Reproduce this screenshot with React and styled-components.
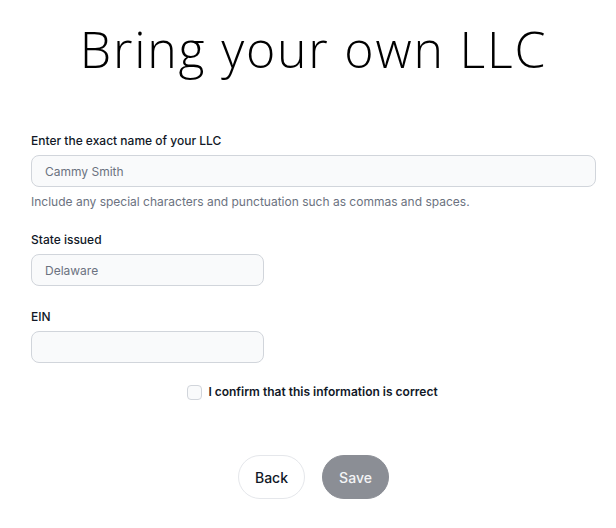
import styled, { createGlobalStyle } from "styled-components";

const GlobalStyle = createGlobalStyle`
  body {
    margin: 0;
    background: #ffffff;
    font-family: Inter, "Liberation Sans", sans-serif;
    color: #111827;
  }
`;

const App = () => {
  return (
    <>
      <GlobalStyle />
      <Page>
        <Title>Bring your own LLC</Title>
        <Form>
          <Field $gap={19}>
            <Label>Enter the exact name of your LLC</Label>
            <TextInput defaultValue="Cammy Smith" />
            <Help>
              Include any special characters and punctuation such as commas and
              spaces.
            </Help>
          </Field>
          <Field>
            <Label>State issued</Label>
            <TextInput $short defaultValue="Delaware" />
          </Field>
          <Field>
            <Label>EIN</Label>
            <TextInput $short />
          </Field>
          <ConfirmRow>
            <Checkbox type="checkbox" />
            <ConfirmText>I confirm that this information is correct</ConfirmText>
          </ConfirmRow>
          <Actions>
            <BackBtn type="button">Back</BackBtn>
            <SaveBtn type="button">Save</SaveBtn>
          </Actions>
        </Form>
      </Page>
    </>
  );
};

const Page = styled.div`
  width: 565px;
  padding: 0 20px 0 31px;
`;

const Title = styled.h1`
  margin: 0;
  padding-top: 15px;
  text-align: center;
  font-family: "Open Sans", sans-serif;
  font-weight: 300;
  font-size: 50px;
  letter-spacing: 1.8px;
  line-height: 68px;
  color: #000000;
`;

const Form = styled.form`
  display: flex;
  flex-direction: column;
  margin-top: 48px;
`;

const Field = styled.div`
  display: flex;
  flex-direction: column;
  margin-bottom: ${(p) => p.$gap ?? 21}px;
`;

const Label = styled.label`
  font-size: 12px;
  font-weight: 500;
  line-height: 20px;
  color: #111827;
  margin-bottom: 4px;
`;

const TextInput = styled.input`
  box-sizing: border-box;
  width: ${(p) => (p.$short ? "233px" : "100%")};
  height: 32px;
  padding: 0 13px;
  background: #f9fafb;
  border: 1px solid #d1d5db;
  border-radius: 8px;
  font-family: Inter, "Liberation Sans", sans-serif;
  font-size: 12px;
  color: #6b7280;
  outline: none;
`;

const Help = styled.p`
  margin: 6px 0 0;
  font-size: 12px;
  line-height: 18px;
  color: #6b7280;
`;

const ConfirmRow = styled.label`
  display: flex;
  align-items: center;
  justify-content: center;
  gap: 6px;
  margin-top: -2px;
  margin-left: -2px;
`;

const Checkbox = styled.input`
  appearance: none;
  width: 15px;
  height: 15px;
  margin: 0;
  border: 1px solid #d1d5db;
  border-radius: 4px;
  background: #f9fafb;
`;

const ConfirmText = styled.span`
  font-size: 12px;
  font-weight: 600;
  line-height: 20px;
  color: #111827;
`;

const Actions = styled.div`
  display: flex;
  justify-content: center;
  gap: 17px;
  margin-top: 53px;
`;

const Pill = styled.button`
  height: 44px;
  width: 67px;
  border-radius: 22px;
  font-family: Inter, "Liberation Sans", sans-serif;
  font-size: 14px;
  font-weight: 500;
  cursor: pointer;
`;

const BackBtn = styled(Pill)`
  background: #ffffff;
  border: 1px solid #e5e7eb;
  color: #111827;
`;

const SaveBtn = styled(Pill)`
  background: #8b8e95;
  border: 1px solid #8b8e95;
  color: #f3f4f6;
`;

export default App;
